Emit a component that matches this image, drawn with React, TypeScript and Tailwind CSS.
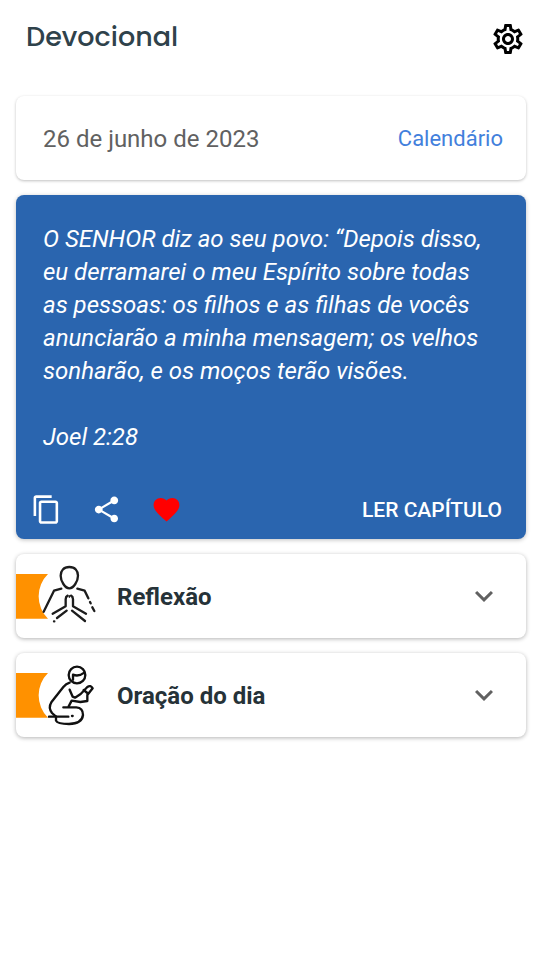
import { useState } from 'react';
import type { ReactNode } from 'react';
import { MdContentCopy, MdExpandMore, MdFavorite, MdOutlineSettings, MdShare } from 'react-icons/md';

interface Section {
  id: string;
  title: string;
  icon: ReactNode;
}

const PrayingHandsIcon = () => (
  <svg
    viewBox="48 27 252 252"
    className="size-21 shrink-0"
    fill="none"
    stroke="#1d1d1d"
    strokeWidth="7"
    strokeLinecap="round"
    strokeLinejoin="round"
    aria-hidden="true"
  >
    <path d="M48 87H144A94 94 0 0 0 144 221H48Z" fill="#ff9100" stroke="none" />
    <path d="M208 66C191 66 182 77 182 92C182 108 195 130 208 130C221 130 234 108 234 92C234 77 225 66 208 66Z" />
    <path d="M184 131L162 137L131 200" />
    <path d="M232 131L254 137L265 160" />
    <path d="M270 171L272 175M277 187L283 198" />
    <path d="M203 152Q197 155 197 163V184L158 206" />
    <path d="M213 152Q219 155 219 163V184L258 206" />
    <path d="M208 152V157" strokeWidth="4" />
    <path d="M200 197L171 219M162 229L163 229" />
    <path d="M216 197L255 228" />
  </svg>
);

const KneelingIcon = () => (
  <svg
    viewBox="48 24 252 252"
    className="size-21 shrink-0"
    fill="none"
    stroke="#111111"
    strokeWidth="7"
    strokeLinecap="round"
    strokeLinejoin="round"
    aria-hidden="true"
  >
    <path d="M48 84H144A94 94 0 0 0 144 218H48Z" fill="#ff9100" stroke="none" />
    <circle cx="231" cy="90" r="25" />
    <path d="M219 104V89Q236 96 253 83" />
    <path d="M209 113Q198 116 190 126L154 172Q144 188 156 204L168 215" />
    <path d="M209 134L218 155L225 158L242 147L262 126Q272 119 278 130L262 150V168L241 171L215 167L206 184" />
    <path d="M251 135L262 144" />
    <path d="M190 187H229Q249 188 249 210Q246 236 207 237Q172 237 168 227V215" />
    <path d="M147 215H205M216 213H218" />
  </svg>
);

const sections: Section[] = [
  { id: 'reflexao', title: 'Reflexão', icon: <PrayingHandsIcon /> },
  { id: 'oracao', title: 'Oração do dia', icon: <KneelingIcon /> }
];

export default function App() {
  const [liked, setLiked] = useState(true);
  const [openSection, setOpenSection] = useState<string | null>(null);

  return (
    <div className="min-h-screen bg-white pr-3.5 pl-4 font-['Roboto',sans-serif]">
      <header className="flex h-24 items-start justify-between pt-[21px] pl-2.5">
        <h1 className="font-['Poppins','Inter',sans-serif] text-[27px] leading-8 font-medium text-[#2f424b]">
          Devocional
        </h1>
        <button type="button" aria-label="Configurações" className="text-black">
          <MdOutlineSettings size={36} />
        </button>
      </header>

      <main className="flex flex-col gap-[15px]">
        <section className="flex h-21 items-center justify-between rounded-lg bg-white pt-0.5 pr-[23px] pl-[27px] shadow-[0_1px_3px_rgba(0,0,0,0.25)]">
          <p className="text-2xl text-[#616161]">26 de junho de 2023</p>
          <a href="#calendario" className="text-[22px] leading-8 text-[#4280dc]">Calendário</a>
        </section>

        <section className="rounded-lg bg-[#2a65af] pt-7 pb-3.5 text-white shadow-[0_1px_4px_rgba(0,0,0,0.25)]">
          <blockquote className="pr-9 pl-[27px] text-2xl leading-[33px] italic">
            <p>
              O SENHOR diz ao seu povo: “Depois disso, eu derramarei o meu Espírito sobre todas as pessoas: os
              filhos e as filhas de vocês anunciarão a minha mensagem; os velhos sonharão, e os moços terão
              visões.
            </p>
            <footer className="mt-[33px]">Joel 2:28</footer>
          </blockquote>

          <div className="mt-10 flex items-center justify-between pr-6 pl-[15px]">
            <div className="flex gap-[29px]">
              <button type="button" aria-label="Copiar">
                <MdContentCopy size={31} />
              </button>
              <button type="button" aria-label="Compartilhar">
                <MdShare size={31} />
              </button>
              <button type="button" aria-label="Favoritar" aria-pressed={liked} onClick={() => setLiked(!liked)}>
                <MdFavorite size={31} className={liked ? 'text-[#ff0000]' : 'text-white'} />
              </button>
            </div>
            <button type="button" className="text-[21px] leading-7 font-medium">LER CAPÍTULO</button>
          </div>
        </section>

        {sections.map((section) => (
          <button
            key={section.id}
            type="button"
            aria-expanded={openSection === section.id}
            onClick={() => setOpenSection(openSection === section.id ? null : section.id)}
            className="flex items-center overflow-hidden rounded-lg bg-white pr-6 text-left shadow-[0_1px_4px_rgba(0,0,0,0.3)]"
          >
            {section.icon}
            <span className="ml-[17px] grow pt-0.5 text-2xl font-bold text-[#263238]">{section.title}</span>
            <MdExpandMore
              size={36}
              className={`text-[#616161] ${openSection === section.id ? 'rotate-180' : ''}`}
            />
          </button>
        ))}
      </main>
    </div>
  );
}
